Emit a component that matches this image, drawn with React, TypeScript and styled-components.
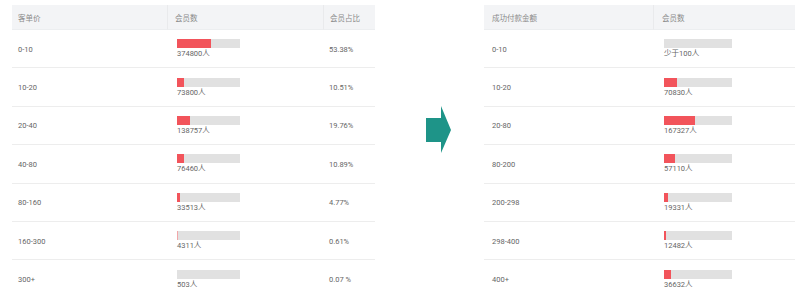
import { Fragment } from 'react';
import styled, { createGlobalStyle } from 'styled-components';

const GlobalStyle = createGlobalStyle`
  html, body {
    margin: 0;
    padding: 0;
    background: #fff;
  }
  body {
    font-family: Roboto, "Noto Sans CJK SC", sans-serif;
  }
`;

const Page = styled.div`
  display: flex;
  align-items: flex-start;
  width: 795px;
  height: 295px;
  padding-top: 5px;
  box-sizing: border-box;
  overflow: hidden;
`;

const Table = styled.div<{ $width: number; $cols: string; $ml: number }>`
  width: ${p => p.$width}px;
  margin-left: ${p => p.$ml}px;
  flex-shrink: 0;
  display: grid;
  grid-template-columns: ${p => p.$cols};
`;

const HeadCell = styled.div<{ $pl: number; $divider?: boolean }>`
  height: 25px;
  background: #f3f4f6;
  display: flex;
  align-items: center;
  padding-left: ${p => p.$pl}px;
  font-size: 7.5px;
  color: #8a8a8a;
  border-left: ${p => (p.$divider ? '1px solid #e9eaec' : 'none')};
  border-bottom: 1px solid #eceef0;
  box-sizing: border-box;
`;

const Cell = styled.div<{ $pl: number }>`
  height: 38.4px;
  box-sizing: border-box;
  border-bottom: 1.5px solid #ededed;
  display: flex;
  flex-direction: column;
  justify-content: center;
  padding-left: ${p => p.$pl}px;
  padding-top: 1px;
  font-size: 7.5px;
  color: #666;
`;

const BarTrack = styled.div<{ $w: number }>`
  width: ${p => p.$w}px;
  height: 9px;
  background: #e1e1e1;
  display: flex;
`;

const BarFill = styled.div<{ $light?: boolean }>`
  height: 100%;
  background: ${p => (p.$light ? '#f2a7a9' : '#f2545b')};
`;

const BarLabel = styled.div`
  margin-top: 1px;
  line-height: 10px;
  color: #666;
`;

const ArrowCol = styled.div`
  margin-left: 51px;
  margin-right: 33px;
  padding-top: 101px;
  flex-shrink: 0;
  display: flex;
`;

type Row = { range: string; count: string; fill: number; ratio?: string };

const leftRows: Row[] = [
  { range: '0-10', count: '374800人', fill: 34, ratio: '53.38%' },
  { range: '10-20', count: '73800人', fill: 7, ratio: '10.51%' },
  { range: '20-40', count: '138757人', fill: 13, ratio: '19.76%' },
  { range: '40-80', count: '76460人', fill: 7, ratio: '10.89%' },
  { range: '80-160', count: '33513人', fill: 3, ratio: '4.77%' },
  { range: '160-300', count: '4311人', fill: 1, ratio: '0.61%' },
  { range: '300+', count: '503人', fill: 0, ratio: '0.07 %' },
];

const rightRows: Row[] = [
  { range: '0-10', count: '少于100人', fill: 0 },
  { range: '10-20', count: '70830人', fill: 13 },
  { range: '20-80', count: '167327人', fill: 31 },
  { range: '80-200', count: '57110人', fill: 11 },
  { range: '200-298', count: '19331人', fill: 4 },
  { range: '298-400', count: '12482人', fill: 2 },
  { range: '400+', count: '36632人', fill: 7 },
];

function Bar({ w, fill }: { w: number; fill: number }) {
  return (
    <BarTrack $w={w}>
      {fill > 0 && <BarFill $light={fill < 2} style={{ width: fill }} />}
    </BarTrack>
  );
}

function App() {
  return (
    <>
      <GlobalStyle />
      <Page>
        <Table $width={363} $cols="155px 156px 52px" $ml={12}>
          <HeadCell $pl={6}>客单价</HeadCell>
          <HeadCell $pl={7} $divider>会员数</HeadCell>
          <HeadCell $pl={6} $divider>会员占比</HeadCell>
          {leftRows.map(r => (
            <Fragment key={r.range}>
              <Cell $pl={6}>{r.range}</Cell>
              <Cell $pl={10}>
                <Bar w={63} fill={r.fill} />
                <BarLabel>{r.count}</BarLabel>
              </Cell>
              <Cell $pl={6}>{r.ratio}</Cell>
            </Fragment>
          ))}
        </Table>
        <ArrowCol>
          <svg width="25" height="47" viewBox="0 0 25 47">
            <polygon points="0,12 15,12 15,0 25,24 15,47 15,36 0,36" fill="#1e9488" />
          </svg>
        </ArrowCol>
        <Table $width={311} $cols="169px 142px" $ml={0}>
          <HeadCell $pl={8}>成功付款金额</HeadCell>
          <HeadCell $pl={8} $divider>会员数</HeadCell>
          {rightRows.map(r => (
            <Fragment key={r.range}>
              <Cell $pl={8}>{r.range}</Cell>
              <Cell $pl={11}>
                <Bar w={68} fill={r.fill} />
                <BarLabel>{r.count}</BarLabel>
              </Cell>
            </Fragment>
          ))}
        </Table>
      </Page>
    </>
  );
}

export default App;
